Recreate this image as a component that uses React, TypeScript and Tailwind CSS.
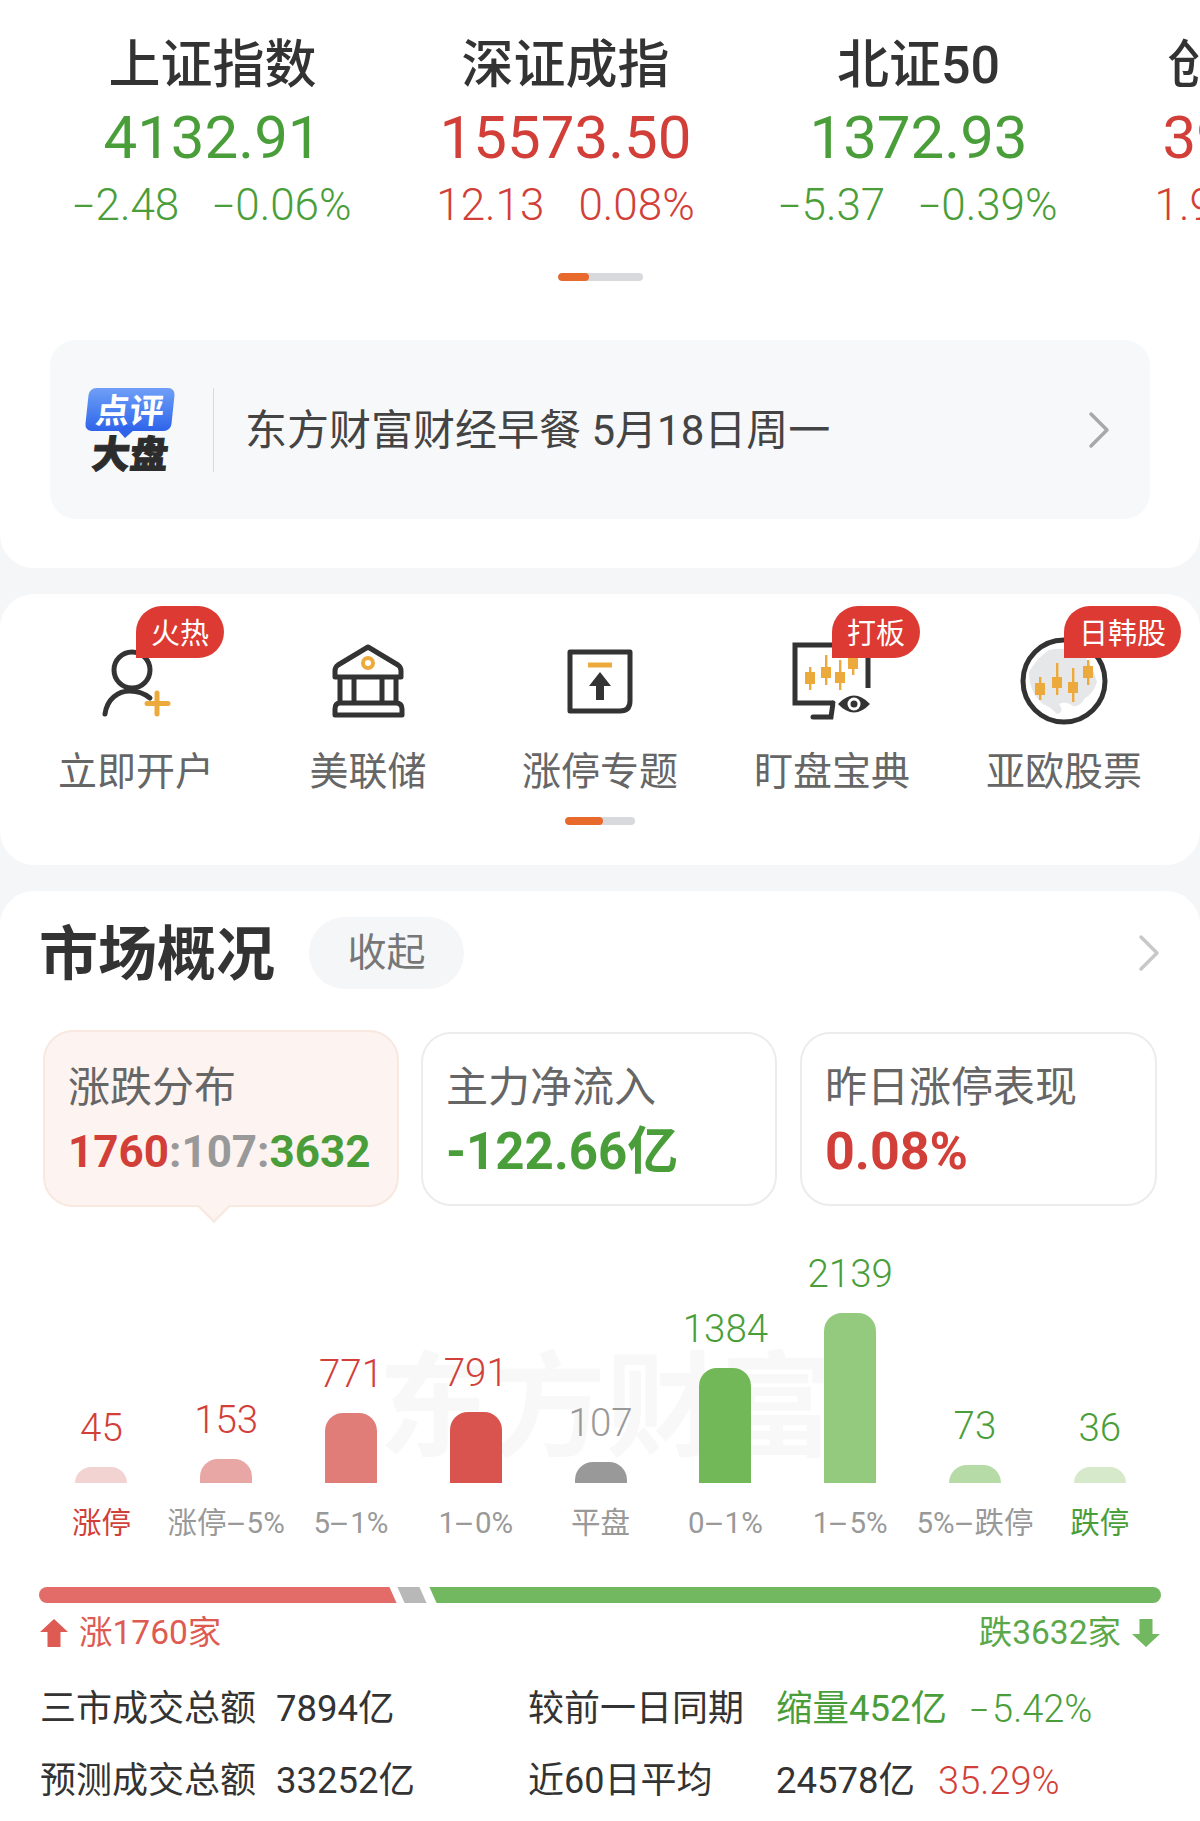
import { ReactNode } from "react";

type Index = { name: string; price: string; change: string; pct: string; up: boolean };

const indexes: Array<Index> = [
  { name: "上证指数", price: "4132.91", change: "-2.48", pct: "-0.06%", up: false },
  { name: "深证成指", price: "15573.50", change: "12.13", pct: "0.08%", up: true },
  { name: "北证50", price: "1372.93", change: "-5.37", pct: "-0.39%", up: false },
  { name: "创业板指", price: "3961.25", change: "1.92", pct: "0.05%", up: true },
];

const bars = [
  { value: "45", label: "涨停", height: "h-[16px]", bar: "bg-[#f3d3d2]", text: "text-[#d23f39]", labelText: "text-[#d23f39]" },
  { value: "153", label: "涨停-5%", height: "h-[24px]", bar: "bg-[#e8a6a4]", text: "text-[#d23f39]", labelText: "text-[#999999]" },
  { value: "771", label: "5-1%", height: "h-[70px]", bar: "bg-[#e07d78]", text: "text-[#d23f39]", labelText: "text-[#999999]" },
  { value: "791", label: "1-0%", height: "h-[71px]", bar: "bg-[#d9534f]", text: "text-[#d23f39]", labelText: "text-[#999999]" },
  { value: "107", label: "平盘", height: "h-[21px]", bar: "bg-[#999999]", text: "text-[#999999]", labelText: "text-[#999999]" },
  { value: "1384", label: "0-1%", height: "h-[115px]", bar: "bg-[#72b858]", text: "text-[#4a9e3a]", labelText: "text-[#999999]" },
  { value: "2139", label: "1-5%", height: "h-[170px]", bar: "bg-[#93ca7e]", text: "text-[#4a9e3a]", labelText: "text-[#999999]" },
  { value: "73", label: "5%-跌停", height: "h-[18px]", bar: "bg-[#b6dba6]", text: "text-[#4a9e3a]", labelText: "text-[#999999]" },
  { value: "36", label: "跌停", height: "h-[16px]", bar: "bg-[#d6eacb]", text: "text-[#4a9e3a]", labelText: "text-[#4a9e3a]" },
];

// the reference's minus is wider than Roboto's hyphen
const Signed = ({ text }: { text: string }): ReactNode =>
  text.startsWith("-") ? (
    <>
      <span className="inline-block w-[22px] origin-left scale-x-[1.700]">-</span>
      {text.slice(1)}
    </>
  ) : (
    text
  );

const RangeLabel = ({ text }: { text: string }) => {
  const parts = text.split("-");
  if (parts.length < 2) return <>{text}</>;
  return (
    <>
      {parts[0]}
      <span className="inline-block w-[20px] origin-left scale-x-[2.200]">-</span>
      {parts[1]}
    </>
  );
};

const Candle = ({ x, wick, body }: { x: number; wick: [number, number]; body: [number, number] }) => (
  <>
    <rect x={x - 1} y={wick[0]} width="2.4" height={wick[1] - wick[0]} fill="#edaa3c" />
    <rect x={x - 5} y={body[0]} width="10" height={body[1] - body[0]} fill="#edaa3c" />
  </>
);

const PersonIcon = () => (
  <svg viewBox="0 0 90 90" className="w-[90px] h-[90px]" fill="none">
    <circle cx="41" cy="34" r="18" stroke="#333" strokeWidth="5" />
    <path d="M14 78C16 63 27 55 39 55C47 55 54 58 59 62" stroke="#333" strokeWidth="5" strokeLinecap="round" />
    <path d="M66 57V78M56 67.500H77" stroke="#edaa3c" strokeWidth="5" strokeLinecap="round" />
  </svg>
);

const BankIcon = () => (
  <svg viewBox="0 0 90 90" className="w-[90px] h-[90px]" fill="none">
    <path d="M45 11L15 29Q12 31 12 35V41H78V35Q78 31 75 29Z" stroke="#333" strokeWidth="5" strokeLinejoin="round" />
    <path d="M17 41V67M31 41V67M59 41V67M73 41V67" stroke="#333" strokeWidth="5" />
    <path d="M17 67H73Q79 67 79 73V79H12V73Q12 67 17 67Z" stroke="#333" strokeWidth="5" strokeLinejoin="round" />
    <circle cx="45" cy="27" r="5" stroke="#edaa3c" strokeWidth="4" />
  </svg>
);

const UpBoxIcon = () => (
  <svg viewBox="0 0 90 90" className="w-[90px] h-[90px]" fill="none">
    <path d="M15 16H75V65Q75 75 65 75H15Z" stroke="#333" strokeWidth="5" strokeLinejoin="round" />
    <path d="M33 29H57" stroke="#edaa3c" strokeWidth="5" />
    <path d="M45 36L56 50H49V64H41V50H34Z" fill="#333" />
  </svg>
);

const MonitorIcon = () => (
  <svg viewBox="0 0 90 90" className="w-[90px] h-[90px]" fill="none">
    <path d="M81 52V9H8V67H46" stroke="#333" strokeWidth="5" />
    <path d="M46 67L44 81H26" stroke="#333" strokeWidth="5" strokeLinecap="round" />
    <Candle x={23} wick={[31, 54]} body={[36, 48]} />
    <Candle x={39} wick={[19, 49]} body={[31, 42]} />
    <Candle x={53} wick={[24, 54]} body={[36, 47]} />
    <Candle x={66} wick={[21, 39]} body={[22, 33]} />
    <path d="M48 68Q67 46 86 68Q67 90 48 68Z" fill="#fff" />
    <path d="M51 68Q67 51 83 68Q67 85 51 68Z" fill="#333" />
    <circle cx="67" cy="68" r="6.500" fill="#fff" />
    <circle cx="67" cy="68" r="3.500" fill="#333" />
  </svg>
);

const GlobeIcon = () => (
  <svg viewBox="0 0 90 90" className="w-[90px] h-[90px]" fill="none">
    <circle cx="45" cy="45" r="41" fill="#fff" stroke="#333" strokeWidth="5" />
    <path d="M10 36Q18 22 30 14Q46 10 64 18Q74 30 78 46Q74 58 66 62Q60 72 54 70Q46 64 40 68Q46 76 38 78Q30 70 24 68Q10 56 10 36Z" fill="#e6e7e9" />
    <Candle x={21} wick={[41, 64]} body={[47, 59]} />
    <Candle x={38} wick={[27, 59]} body={[41, 52]} />
    <Candle x={54} wick={[32, 66]} body={[46, 57]} />
    <Candle x={69} wick={[24, 49]} body={[30, 42]} />
  </svg>
);

const Chevron = ({ stroke }: { stroke: string }) => (
  <svg viewBox="0 0 22 38" className="w-[22px] h-[38px] shrink-0" fill="none">
    <path d="M3 3L19 19L3 35" stroke={stroke} strokeWidth="3.500" strokeLinecap="round" strokeLinejoin="round" />
  </svg>
);

const shortcuts = [
  { label: "立即开户", icon: <PersonIcon />, badge: "火热", badgeW: "w-[88px]" },
  { label: "美联储", icon: <BankIcon /> },
  { label: "涨停专题", icon: <UpBoxIcon /> },
  { label: "盯盘宝典", icon: <MonitorIcon />, badge: "打板", badgeW: "w-[88px]" },
  { label: "亚欧股票", icon: <GlobeIcon />, badge: "日韩股", badgeW: "w-[117px]" },
];

const stats = [
  { label: "三市成交总额", value: "7894亿", label2: "较前一日同期", value2: "缩量452亿", tone2: "text-[#4a9e3a]", pct: "-5.42%", pctTone: "text-[#4a9e3a]" },
  { label: "预测成交总额", value: "33252亿", label2: "近60日平均", value2: "24578亿", tone2: "text-[#333333]", pct: "35.29%", pctTone: "text-[#d23f39]" },
];

const App = () => {
  return (
    <div className="w-[1200px] h-[1821px] overflow-hidden bg-[#f5f6f8] font-['Roboto','Noto_Sans_CJK_SC',sans-serif]">
      {/* indexes */}
      <div className="h-[568px] bg-white rounded-b-[34px] pt-[36px]">
        <div className="flex overflow-hidden pl-[36px]">
          {indexes.map((e, i) => (
            <div key={i} className="w-[353px] shrink-0 flex flex-col items-center">
              <div className="text-[52px] leading-[60px] font-medium text-[#333333] whitespace-nowrap">{e.name}</div>
              <div className={`mt-[7px] text-[60px] leading-[70px] whitespace-nowrap ${e.up ? "text-[#d23f39]" : "text-[#4a9e3a]"}`}>
                {e.price}
              </div>
              <div className={`mt-[7px] flex gap-[34px] text-[44px] leading-[50px] font-light whitespace-nowrap ${e.up ? "text-[#d23f39]" : "text-[#4a9e3a]"}`}>
                <span><Signed text={e.change} /></span>
                <span><Signed text={e.pct} /></span>
              </div>
            </div>
          ))}
        </div>

        <div className="mt-[43px] mx-auto w-[85px] h-[8px] rounded-full bg-[#d8d9dd] overflow-hidden">
          <div className="w-[31px] h-full rounded-full bg-[#e8692c]"></div>
        </div>

        <div className="mt-[59px] mx-[50px] h-[179px] rounded-[26px] bg-[#f7f8fa] flex items-center pl-[37px] pr-[40px]">
          <div className="w-[86px] shrink-0 flex flex-col items-center">
            <div className="relative w-[86px] h-[43px] -skew-x-[6deg] rounded-[7px] bg-gradient-to-b from-[#6f9ff7] to-[#2f63ea] flex items-center justify-center">
              <span className="pt-[3px] text-[34px] leading-[40px] font-bold text-white">点评</span>
              <div className="absolute left-[36px] -bottom-[5px] w-[10px] h-[10px] rotate-45 bg-[#2f63ea]"></div>
            </div>
            <div className="mt-[7px] text-[38px] leading-[34px] font-black text-[#2c2c2c] -skew-x-[6deg] whitespace-nowrap [-webkit-text-stroke:1px_#2c2c2c]">大盘</div>
          </div>
          <div className="ml-[40px] w-[1px] h-[84px] bg-[#d9dadd]"></div>
          <div className="ml-[31px] pt-[2px] flex-1 text-[42px] leading-[50px] text-[#444444] whitespace-nowrap">东方财富财经早餐 5月18日周一</div>
          <Chevron stroke="#a8a8a8" />
        </div>
      </div>

      {/* shortcuts */}
      <div className="mt-[26px] h-[271px] bg-white rounded-[34px] px-[20px] pt-[42px] relative">
        <div className="flex">
          {shortcuts.map((e, i) => (
            <div key={i} className="w-[232px] shrink-0 relative flex flex-col items-center">
              {e.icon}
              {e.badge && (
                <div
                  className={`absolute left-[116px] -top-[30px] h-[52px] ${e.badgeW} bg-[#dc3a32] rounded-t-[26px] rounded-br-[26px] flex items-center justify-center pt-[3px] text-[29px] leading-[34px] text-white`}
                >
                  {e.badge}
                </div>
              )}
              <div className="mt-[24px] text-[39px] leading-[44px] text-[#666666] whitespace-nowrap">{e.label}</div>
            </div>
          ))}
        </div>
        <div className="mt-[23px] mx-auto w-[70px] h-[8px] rounded-full bg-[#d8d9dd] overflow-hidden">
          <div className="w-[38px] h-full rounded-full bg-[#e8692c]"></div>
        </div>
      </div>

      {/* market overview */}
      <div className="mt-[26px] h-[930px] bg-white rounded-t-[34px] pt-[26px]">
        <div className="h-[72px] flex items-center pl-[39px] pr-[40px]">
          <div className="pt-[4px] text-[59px] leading-[72px] font-bold text-[#333333]">市场概况</div>
          <div className="ml-[34px] w-[155px] h-[72px] rounded-[36px] bg-[#f5f6f8] flex items-center justify-center text-[39px] text-[#777777]">收起</div>
          <div className="ml-auto"><Chevron stroke="#c8c8c8" /></div>
        </div>

        <div className="mt-[41px] ml-[43px] h-[177px] flex items-center">
          <div className="relative w-[356px] h-[177px] rounded-[30px] border-2 border-[#f8e8e0] bg-[#fdf3f0] pl-[23px] pt-[30px]">
            <div className="text-[42px] leading-[52px] text-[#666666]">涨跌分布</div>
            <div className="mt-[10px] text-[44px] leading-[56px] font-bold whitespace-nowrap">
              <span className="text-[#d23f39]">1760</span>
              <span className="text-[#999999]">:107:</span>
              <span className="text-[#4a9e3a]">3632</span>
            </div>
            <div className="absolute left-[157px] -bottom-[13px] w-[24px] h-[24px] rotate-45 bg-[#fdf3f0] border-r-2 border-b-2 border-[#f8e8e0]"></div>
          </div>
          <div className="ml-[22px] w-[356px] h-[174px] rounded-[30px] border-2 border-[#ececec] pl-[23px] pt-[28px]">
            <div className="text-[42px] leading-[52px] text-[#666666]">主力净流入</div>
            <div className="mt-[10px] text-[51px] leading-[56px] font-bold text-[#4a9e3a] whitespace-nowrap">-122.66亿</div>
          </div>
          <div className="ml-[23px] w-[357px] h-[174px] rounded-[30px] border-2 border-[#ececec] pl-[23px] pt-[28px]">
            <div className="text-[42px] leading-[52px] text-[#666666]">昨日涨停表现</div>
            <div className="mt-[10px] text-[52px] leading-[56px] font-bold text-[#d23f39] whitespace-nowrap">0.08%</div>
          </div>
        </div>

        {/* chart */}
        <div className="relative mt-[46px] pl-[39px] h-[288px] flex">
          <div className="absolute left-[378px] top-[82px] text-[114px] leading-[125px] font-['Noto_Sans_CJK_SC'] font-bold text-[#f8f8f8] whitespace-nowrap">东方财富</div>
          {bars.map((e, i) => (
            <div key={i} className="relative w-[124.800px] h-full flex flex-col items-center justify-end">
              <div className={`text-[38.500px] leading-[38px] font-light ${e.text}`}>{e.value}</div>
              <div className={`mt-[20px] w-[52px] rounded-t-[18px] ${e.height} ${e.bar}`}></div>
              <div className={`mt-[22px] text-[29.500px] leading-[36px] whitespace-nowrap ${e.labelText}`}>
                <RangeLabel text={e.label} />
              </div>
            </div>
          ))}
        </div>

        {/* up / down ratio */}
        <div className="mt-[46px] mx-[39px] h-[16px] rounded-full overflow-hidden flex">
          <div className="w-[354px] -ml-[8px] bg-[#e36c68] skew-x-[24deg] shrink-0 box-content pl-[8px]"></div>
          <div className="ml-[8px] w-[22px] bg-[#b8b8b8] skew-x-[24deg] shrink-0"></div>
          <div className="ml-[10px] flex-1 bg-[#72b860] skew-x-[24deg] -mr-[10px]"></div>
        </div>

        <div className="mt-[10px] mx-[39px] h-[40px] flex items-center justify-between text-[33.500px] leading-[40px]">
          <div className="flex items-center gap-[10px] text-[#dd5b52]">
            <svg viewBox="0 0 30 30" className="w-[30px] h-[30px]"><path d="M15 1L29 14H21.500V29H8.500V14H1Z" fill="#dd5b52" /></svg>
            <span>涨1760家</span>
          </div>
          <div className="flex items-center gap-[10px] text-[#5aa84a]">
            <span>跌3632家</span>
            <svg viewBox="0 0 30 30" className="w-[30px] h-[30px]"><path d="M15 29L29 16H21.500V1H8.500V16H1Z" fill="#72b860" /></svg>
          </div>
        </div>

        <div className="mt-[34px] ml-[40px] flex flex-col gap-[28px] text-[36px] leading-[44px] text-[#333333]">
          {stats.map((e, i) => (
            <div key={i} className="grid grid-cols-[236px_252px_248px_1fr] whitespace-nowrap">
              <span>{e.label}</span>
              <span className="text-[36.500px]">{e.value}</span>
              <span>{e.label2}</span>
              <span className="flex gap-[23px] text-[36.500px]">
                <span className={e.tone2}>{e.value2}</span>
                <span className={`text-[38px] font-light ${e.pctTone}`}><Signed text={e.pct} /></span>
              </span>
            </div>
          ))}
        </div>
      </div>
    </div>
  );
};

export default App;
